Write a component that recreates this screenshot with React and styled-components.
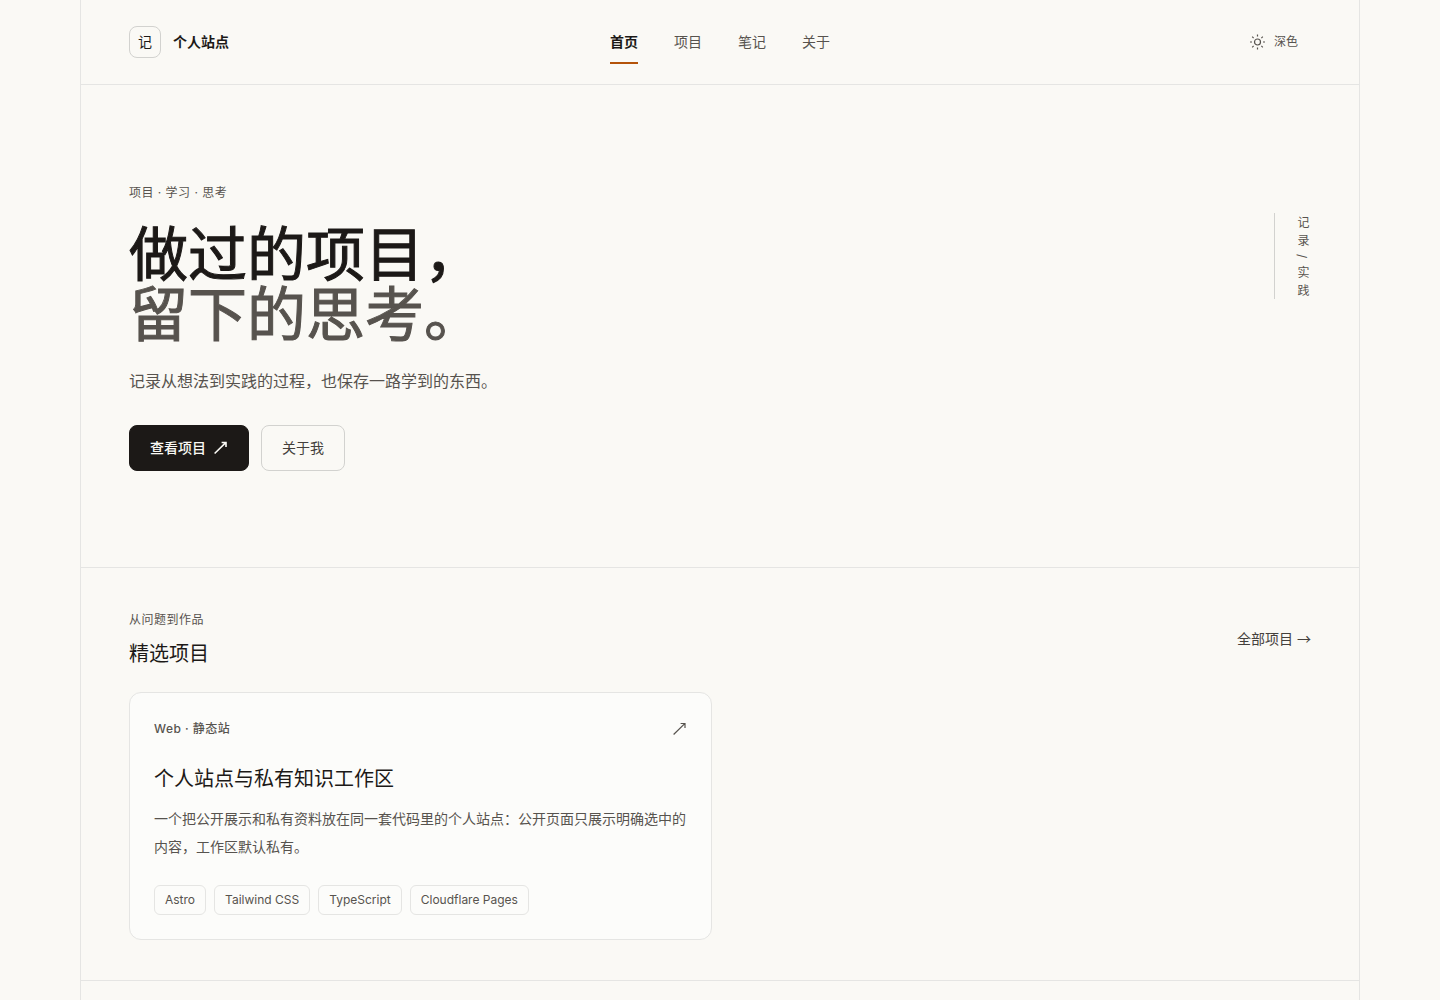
import React, { useState } from "react";
import styled, { createGlobalStyle, css } from "styled-components";

const color = {
  page: "#faf9f5",
  card: "#fcfcfa",
  ink: "#1c1917",
  text: "#44403c",
  muted: "#57534e",
  line: "#e5e5e3",
  lineStrong: "#d2d2cf",
  accent: "#b45309",
};

const GlobalStyle = createGlobalStyle`
  *, *::before, *::after { box-sizing: border-box; }
  body {
    margin: 0;
    background: ${color.page};
    color: ${color.ink};
    font-family: Inter, "Noto Sans CJK SC", sans-serif;
    font-size: 14px;
    line-height: 24px;
  }
  h1, h2, h3, p, ul { margin: 0; padding: 0; }
  a { color: inherit; text-decoration: none; }
  button { font: inherit; color: inherit; cursor: pointer; }
`;

const Shell = styled.div`
  max-width: 1280px;
  min-height: 100vh;
  margin: 0 auto;
  border: solid ${color.line};
  border-width: 0 1px;
`;

const Header = styled.header`
  display: grid;
  grid-template-columns: 1fr auto 1fr;
  align-items: center;
  padding: 20px 48px;
  border-bottom: 1px solid ${color.line};
`;

const Brand = styled.a`
  display: flex;
  align-items: center;
  gap: 12px;
  font-weight: 600;
`;

const BrandMark = styled.span`
  display: grid;
  place-items: center;
  width: 32px;
  height: 32px;
  border: 1px solid ${color.lineStrong};
  border-radius: 8px;
  font-weight: 400;
`;

const Nav = styled.nav`
  display: flex;
  gap: 36px;
`;

const NavLink = styled.a`
  padding: 10px 0 8px;
  border-bottom: 2px solid transparent;
  color: ${color.muted};
  ${(p) =>
    p.$active &&
    css`
      color: ${color.ink};
      font-weight: 600;
      border-color: ${color.accent};
    `}
`;

const ThemeButton = styled.button`
  justify-self: end;
  display: flex;
  align-items: center;
  gap: 8px;
  height: 40px;
  padding: 0 12px;
  border: 1px solid transparent;
  border-radius: 8px;
  background: transparent;
  color: ${color.muted};
  font-size: 12px;
`;

const Hero = styled.section`
  display: flex;
  justify-content: space-between;
  padding: 96px 48px;
  border-bottom: 1px solid ${color.line};
`;

const Eyebrow = styled.p`
  color: ${color.muted};
  font-size: 12px;
  font-weight: ${(p) => (p.$strong ? 500 : 400)};
  letter-spacing: 0.04em;
`;

const HeroTitle = styled.h1`
  margin-top: 20px;
  font-size: 59px;
  font-weight: 400;
  line-height: 60px;
  -webkit-text-stroke: 1px currentColor;
`;

const HeroTitleSoft = styled.span`
  display: block;
  color: ${color.muted};
`;

const Lead = styled.p`
  margin-top: 20px;
  color: ${color.muted};
  font-size: 16px;
  line-height: 32px;
`;

const Actions = styled.div`
  display: flex;
  gap: 12px;
  margin-top: 28px;
`;

const ActionLink = styled.a`
  display: flex;
  align-items: center;
  gap: 8px;
  padding: 10px 20px;
  border: 1px solid ${(p) => (p.$primary ? color.ink : color.lineStrong)};
  border-radius: 8px;
  background: ${(p) => (p.$primary ? color.ink : "transparent")};
  color: ${(p) => (p.$primary ? color.page : color.text)};
  font-weight: ${(p) => (p.$primary ? 500 : 400)};
`;

const SideNote = styled.p`
  display: flex;
  align-self: flex-start;
  margin-top: 32px;
  padding-left: 18px;
  border-left: 1px solid ${color.lineStrong};
  color: ${color.muted};
  font-size: 12px;
  line-height: 18px;
  white-space: nowrap;
  writing-mode: vertical-rl;
`;

const NoteWord = styled.span`
  margin-bottom: -3px;
  padding-top: 3px;
  letter-spacing: 0.5em;
`;

const NoteSlash = styled.span`
  padding: 5px 0;
`;

const Section = styled.section`
  padding: 40px 48px;
  border-bottom: 1px solid ${color.line};
`;

const SectionHead = styled.div`
  display: flex;
  align-items: center;
  justify-content: space-between;
  margin-bottom: 24px;
`;

const SectionTitle = styled.h2`
  margin-top: 8px;
  font-size: 20px;
  font-weight: 400;
  line-height: 28px;
`;

const MoreLink = styled.a`
  color: ${color.text};
`;

const MoreArrow = styled.span`
  font-family: "Noto Sans CJK SC", sans-serif;
`;

const CardGrid = styled.div`
  display: grid;
  grid-template-columns: repeat(2, minmax(0, 1fr));
  gap: 16px;
`;

const Card = styled.article`
  padding: 24px;
  border: 1px solid ${color.line};
  border-radius: 12px;
  background: ${color.card};
`;

const CardTop = styled.div`
  display: flex;
  align-items: center;
  justify-content: space-between;
  color: ${color.muted};
`;

const CardTitle = styled.h3`
  margin-top: 24px;
  font-size: 20px;
  font-weight: 400;
  line-height: 28px;
`;

const CardText = styled.p`
  margin-top: 12px;
  color: ${color.muted};
  line-height: 28px;
`;

const Tags = styled.ul`
  display: flex;
  flex-wrap: wrap;
  gap: 8px;
  margin-top: 24px;
  list-style: none;
`;

const Tag = styled.li`
  padding: 4px 10px;
  border: 1px solid ${color.line};
  border-radius: 6px;
  color: ${color.muted};
  font-size: 12px;
  line-height: 20px;
`;

const SunIcon = () => (
  <svg width="16" height="16" viewBox="0.5 0 16 16" fill="none" stroke="currentColor" strokeWidth="1.2" aria-hidden="true">
    <circle cx="8" cy="8" r="3" />
    <path d="M8 .5v2M8 13.5v2M.5 8h2M13.5 8h2M2.7 2.7l1.4 1.4M11.9 11.9l1.4 1.4M2.7 13.3l1.4-1.4M11.9 4.1l1.4-1.4" />
  </svg>
);

const ArrowUpRight = ({ weight = 1.2 }) => (
  <svg width="14" height="14" viewBox="0 0 14 14" fill="none" stroke="currentColor" strokeWidth={weight} aria-hidden="true">
    <path d="M.6 12.5L12 1.4M7.6 1.5H12v4.4" />
  </svg>
);

const links = ["首页", "项目", "笔记", "关于"];
const tags = ["Astro", "Tailwind CSS", "TypeScript", "Cloudflare Pages"];

export default function App() {
  const [active, setActive] = useState(links[0]);
  return (
    <>
      <GlobalStyle />
      <Shell lang="zh-CN">
        <Header>
          <Brand href="#">
            <BrandMark>记</BrandMark>
            个人站点
          </Brand>
          <Nav>
            {links.map((label) => (
              <NavLink key={label} href="#" $active={label === active} onClick={() => setActive(label)}>
                {label}
              </NavLink>
            ))}
          </Nav>
          <ThemeButton type="button">
            <SunIcon />
            深色
          </ThemeButton>
        </Header>

        <main>
          <Hero>
            <div>
              <Eyebrow>项目 · 学习 · 思考</Eyebrow>
              <HeroTitle>
                做过的项目，
                <HeroTitleSoft>留下的思考。</HeroTitleSoft>
              </HeroTitle>
              <Lead>记录从想法到实践的过程，也保存一路学到的东西。</Lead>
              <Actions>
                <ActionLink href="#" $primary>
                  查看项目
                  <ArrowUpRight weight={1.6} />
                </ActionLink>
                <ActionLink href="#">关于我</ActionLink>
              </Actions>
            </div>
            <SideNote>
              <NoteWord>记录</NoteWord>
              <NoteSlash>/</NoteSlash>
              <NoteWord>实践</NoteWord>
            </SideNote>
          </Hero>

          <Section>
            <SectionHead>
              <div>
                <Eyebrow>从问题到作品</Eyebrow>
                <SectionTitle>精选项目</SectionTitle>
              </div>
              <MoreLink href="#">
                全部项目 <MoreArrow>→</MoreArrow>
              </MoreLink>
            </SectionHead>
            <CardGrid>
              <Card>
                <CardTop>
                  <Eyebrow $strong>Web · 静态站</Eyebrow>
                  <ArrowUpRight />
                </CardTop>
                <CardTitle>个人站点与私有知识工作区</CardTitle>
                <CardText>
                  一个把公开展示和私有资料放在同一套代码里的个人站点：公开页面只展示明确选中的内容，工作区默认私有。
                </CardText>
                <Tags>
                  {tags.map((tag) => (
                    <Tag key={tag}>{tag}</Tag>
                  ))}
                </Tags>
              </Card>
            </CardGrid>
          </Section>
        </main>
      </Shell>
    </>
  );
}
